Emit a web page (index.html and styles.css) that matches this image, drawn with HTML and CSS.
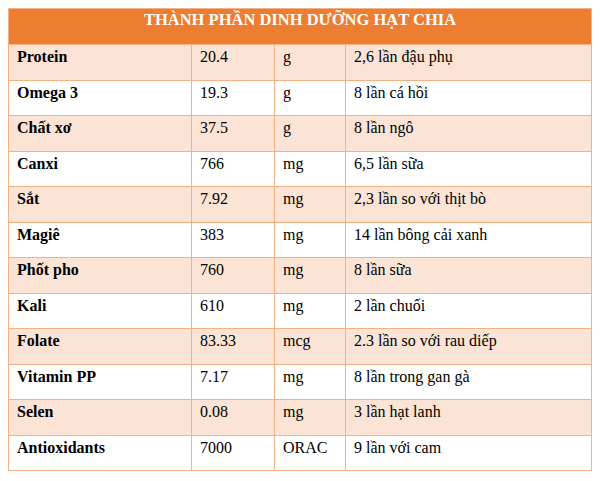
FILE: index.html
```html
<!DOCTYPE html>
<html lang="vi">
<head>
<meta charset="utf-8">
<link rel="stylesheet" href="styles.css">
</head>
<body>
<div class="wrap">
<table class="nutri">
  <colgroup>
    <col class="c1"><col class="c2"><col class="c3"><col class="c4">
  </colgroup>
  <thead>
    <tr><th colspan="4">THÀNH PHẦN DINH DƯỠNG HẠT CHIA</th></tr>
  </thead>
  <tbody>
    <tr class="alt"><td class="name">Protein</td><td>20.4</td><td>g</td><td>2,6 lần đậu phụ</td></tr>
    <tr><td class="name">Omega 3</td><td>19.3</td><td>g</td><td>8 lần cá hồi</td></tr>
    <tr class="alt"><td class="name">Chất xơ</td><td>37.5</td><td>g</td><td>8 lần ngô</td></tr>
    <tr><td class="name">Canxi</td><td>766</td><td>mg</td><td>6,5 lần sữa</td></tr>
    <tr class="alt"><td class="name">Sắt</td><td>7.92</td><td>mg</td><td>2,3 lần so với thịt bò</td></tr>
    <tr><td class="name">Magiê</td><td>383</td><td>mg</td><td>14 lần bông cải xanh</td></tr>
    <tr class="alt"><td class="name">Phốt pho</td><td>760</td><td>mg</td><td>8 lần sữa</td></tr>
    <tr><td class="name">Kali</td><td>610</td><td>mg</td><td>2 lần chuối</td></tr>
    <tr class="alt"><td class="name">Folate</td><td>83.33</td><td>mcg</td><td>2.3 lần so với rau diếp</td></tr>
    <tr><td class="name">Vitamin PP</td><td>7.17</td><td>mg</td><td>8 lần trong gan gà</td></tr>
    <tr class="alt"><td class="name">Selen</td><td>0.08</td><td>mg</td><td>3 lần hạt lanh</td></tr>
    <tr><td class="name">Antioxidants</td><td>7000</td><td>ORAC</td><td>9 lần với cam</td></tr>
  </tbody>
</table>
</div>
</body>
</html>
```

FILE: styles.css
```css
html, body {
  margin: 0;
  padding: 0;
  background: #ffffff;
}

.wrap {
  padding: 8px 9px 0 8px;
}

.nutri {
  border-collapse: collapse;
  table-layout: fixed;
  width: 583px;
  font-family: "Liberation Serif", "Times New Roman", serif;
  font-size: 16px;
  color: #000000;
}

.c1 { width: 183px; }
.c2 { width: 83px; }
.c3 { width: 71px; }
.c4 { width: 246px; }

.nutri th {
  font-family: "Liberation Serif", "Times New Roman", serif;
  background: #ed7d31;
  color: #ffffff;
  font-weight: bold;
  font-size: 16.5px;
  text-align: center;
  height: 36px;
  padding: 2px 8px 0;
  vertical-align: top;
  line-height: 18px;
  border: 1px solid #f4b183;
  box-sizing: border-box;
}

.nutri td {
  font-family: "Liberation Serif", "Times New Roman", serif;
  height: 35.5px;
  padding: 3px 8px 0;
  vertical-align: top;
  line-height: 18px;
  border: 1px solid #f4b183;
  box-sizing: border-box;
  white-space: nowrap;
}

.nutri tr.alt td {
  background: #fbe4d5;
}

.nutri td.name {
  font-weight: bold;
}
```
